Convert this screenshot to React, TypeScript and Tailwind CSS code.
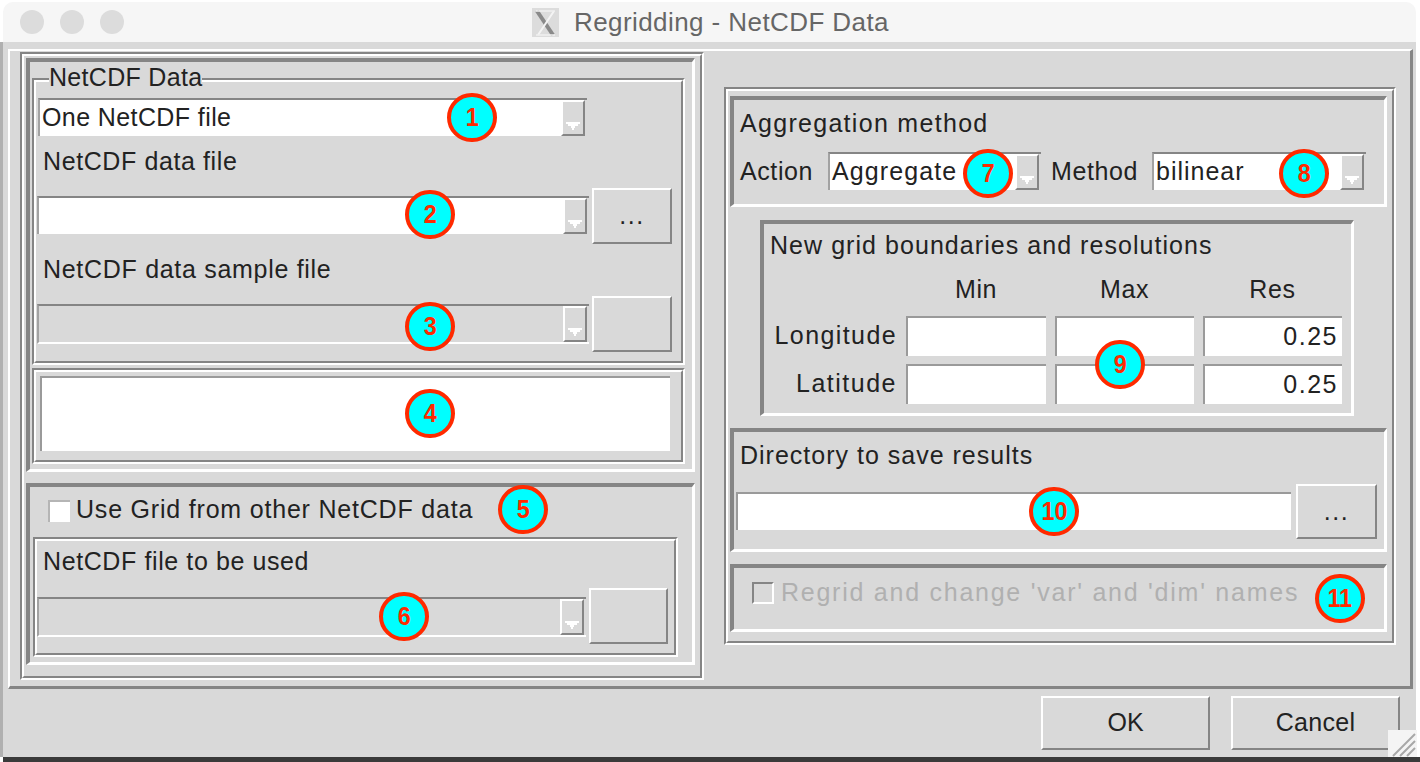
import React from "react";

const raisedEtch = "border-2 border-t-[#858585] border-l-[#858585] border-r-white border-b-white";
const etchInner = "border-2 border-t-white border-l-white border-r-[#858585] border-b-[#858585]";
const sunken = "border-t-4 border-l-4 border-r-[3px] border-b-[3px] border-t-[#858585] border-l-[#858585] border-r-white border-b-white";
const label = "h-[30px] leading-[30px] text-[25px] text-[#222222] whitespace-nowrap";

function Etched({ className, children }: { className: string; children?: React.ReactNode }) {
  return (
    <div className={`${raisedEtch} ${className}`}>
      <div className={`${etchInner} w-full h-full`}>{children}</div>
    </div>
  );
}

function Arrow() {
  return (
    <svg width="14" height="8" viewBox="0 0 14 8" fill="#ffffff" className="block">
      <polygon points="0,0 14,0 14,2 12,2 12,4 9,4 9,6 8,6 8,8 6,8 6,6 5,6 5,4 2,4 2,2 0,2" />
    </svg>
  );
}

function Combo({ w, value, disabled, track }: { w: string; value?: string; disabled?: boolean; track?: string }) {
  return (
    <div
      className={`${w} flex border-t-2 border-l-2 border-t-[#858585] border-l-[#a2a2a2] ${
        disabled ? "h-[40px] bg-[#d9d9d9] border-b-2 border-b-white" : "h-[38px]"
      }`}
    >
      <div
        className={`flex-1 min-w-0 overflow-hidden pl-[2px] leading-[34px] text-[25px] text-[#222222] whitespace-nowrap ${track ?? ""} ${
          disabled ? "" : "bg-white"
        }`}
      >
        {value}
      </div>
      <div className="w-[24px] mr-[2px] h-full flex items-end justify-center pb-[4px] bg-[#d9d9d9] border-t-2 border-l-2 border-t-white border-l-white border-r-2 border-b-2 border-r-[#858585] border-b-[#858585]">
        <Arrow />
      </div>
    </div>
  );
}

function Btn({ className, text, tc }: { className: string; text?: string; tc?: string }) {
  return (
    <div
      className={`${className} flex items-center justify-center bg-[#d9d9d9] border-2 border-t-white border-l-white border-r-[#858585] border-b-[#858585] text-[25px] text-[#222222] ${tc ?? ""}`}
    >
      {text}
    </div>
  );
}

function Field({ value }: { value?: string }) {
  return (
    <div className="w-full h-[40px] bg-white border-t-2 border-l-2 border-t-[#9a9a9a] border-l-[#9a9a9a] pr-[4px] text-right leading-[36px] text-[25px] tracking-[1.5px] text-[#222222]">
      {value}
    </div>
  );
}

function Badge({ n, cls }: { n: string; cls: string }) {
  return (
    <div
      className={`absolute ${cls} w-[50px] h-[49px] rounded-full bg-[#00ffff] border-4 border-[#ff2a00] flex items-center justify-center text-[#ff2a00] font-bold text-[26px]`}
    >
      <span className="block scale-x-[0.9]">{n}</span>
    </div>
  );
}

export default function App() {
  return (
    <div className="relative w-[1420px] h-[762px] overflow-hidden bg-white flex font-['Liberation_Sans',sans-serif]">
      <div className="w-[3px] mt-[42px] h-[715px] bg-[#b0b0b0]" />
      <div className="w-[1413px] pt-[2px]">
        {/* title bar */}
        <div className="h-[40px] bg-[#f6f6f6] rounded-t-[10px] flex items-center">
          <div className="ml-[17px] flex gap-[16px]">
            <div className="w-[24px] h-[24px] rounded-full bg-[#dcdcdc]" />
            <div className="w-[24px] h-[24px] rounded-full bg-[#dcdcdc]" />
            <div className="w-[24px] h-[24px] rounded-full bg-[#dcdcdc]" />
          </div>
          <svg width="27" height="29" viewBox="0 0 27 29" className="ml-[408px] block">
            <rect width="27" height="29" fill="#dcdcdc" />
            <path d="M5 3 L21 27" stroke="#8a8a8a" strokeWidth="4" />
            <path d="M22 3 L6 27" stroke="#f4f4f4" strokeWidth="2" />
            <path d="M4 3 H23 M4 27 H23" stroke="#efefef" strokeWidth="1.5" />
          </svg>
          <div className="ml-[15px] text-[26px] tracking-[0.42px] text-[#666666] whitespace-nowrap">
            Regridding - NetCDF Data
          </div>
        </div>

        {/* body */}
        <div className="h-[715px] bg-[#d9d9d9] pl-[5px] pt-[7px]">
          <div className="w-[1405px] h-[640px] flex items-start border-t-2 border-l-2 border-t-white border-l-white border-r-[3px] border-b-[3px] border-r-[#858585] border-b-[#858585] pl-[10px] pt-[1px]">
            {/* left column */}
            <Etched className="w-[684px] h-[628px] shrink-0">
              <div className={`${sunken} ml-[2px] mt-[2px] w-[669px] h-[414px]`}>
                <Etched className="relative ml-[2px] mt-[16px] w-[653px] h-[287px]">
                  <div className="absolute left-[15px] top-[-18px] bg-[#d9d9d9] h-[30px] leading-[30px] text-[25px] tracking-[0.3px] text-[#222222] whitespace-nowrap">
                    NetCDF Data
                  </div>
                  <div className="ml-[2px] pt-[16px]">
                    <Combo w="w-[549px]" value="One NetCDF file" track="tracking-[0.4px]" />
                  </div>
                  <div className={`${label} tracking-[0.6px] ml-[7px] mt-[10px]`}>NetCDF data file</div>
                  <div className="flex items-start mt-[12px] ml-[1px]">
                    <div className="mt-[8px]">
                      <Combo w="w-[552px]" />
                    </div>
                    <Btn className="ml-[3px] w-[80px] h-[56px]" text="..." tc="tracking-[1.5px]" />
                  </div>
                  <div className={`${label} tracking-[0.7px] ml-[7px] mt-[10px]`}>NetCDF data sample file</div>
                  <div className="flex items-start mt-[12px] ml-[1px]">
                    <div className="mt-[8px]">
                      <Combo w="w-[552px]" disabled />
                    </div>
                    <Btn className="ml-[3px] w-[80px] h-[56px]" />
                  </div>
                </Etched>
                <Etched className="ml-[2px] mt-[3px] w-[653px] h-[96px]">
                  <div className="ml-[4px] mt-[4px] w-[630px] h-[75px] bg-white border-t-2 border-l-2 border-t-[#9a9a9a] border-l-[#9a9a9a]" />
                </Etched>
              </div>

              <div className={`${sunken} ml-[2px] mt-[11px] w-[669px] h-[182px]`}>
                <div className="flex items-center ml-[18px] mt-[13px] h-[22px]">
                  <div className="w-[22px] h-[22px] bg-white border-t-2 border-l-2 border-t-[#b5b5b5] border-l-[#b5b5b5]" />
                  <div className="ml-[6px] -mt-[2px] text-[25px] tracking-[0.8px] text-[#222222] whitespace-nowrap">
                    Use Grid from other NetCDF data
                  </div>
                </div>
                <Etched className="ml-[3px] mt-[15px] w-[645px] h-[120px]">
                  <div className={`${label} tracking-[0.6px] ml-[6px] mt-[5px]`}>NetCDF file to be used</div>
                  <div className="flex items-start mt-[12px]">
                    <div className="mt-[9px]">
                      <Combo w="w-[549px]" disabled />
                    </div>
                    <Btn className="ml-[3px] w-[79px] h-[56px]" />
                  </div>
                </Etched>
              </div>
            </Etched>

            {/* right column */}
            <Etched className="ml-[20px] mt-[35px] w-[672px] h-[558px] shrink-0">
              <div className={`${sunken} ml-[2px] mt-[5px] w-[657px] h-[111px]`}>
                <div className={`${label} tracking-[1.3px] ml-[6px] mt-[8px]`}>Aggregation method</div>
                <div className="flex items-start ml-[6px] mt-[14px] h-[40px]">
                  <div className="w-[88px] h-[38px] leading-[38px] text-[25px] tracking-[0.6px] text-[#222222]">Action</div>
                  <Combo w="w-[213px]" value="Aggregate" track="tracking-[1.1px]" />
                  <div className="ml-[10px] w-[101px] h-[38px] leading-[38px] text-[25px] tracking-[0.6px] text-[#222222]">Method</div>
                  <Combo w="w-[214px]" value="bilinear" track="tracking-[1px]" />
                </div>
              </div>

              <div className={`${sunken} ml-[32px] mt-[13px] w-[594px] h-[196px]`}>
                <div className={`${label} tracking-[1.05px] ml-[6px] mt-[6px]`}>New grid boundaries and resolutions</div>
                <div className="mt-[14px] grid grid-cols-[133px_140px_139px_139px] gap-x-[9px] gap-y-[8px]">
                  <div className="h-[30px] mb-[4px]" />
                  <div className={`${label} tracking-[0.6px] mb-[4px] text-center`}>Min</div>
                  <div className={`${label} tracking-[0.6px] mb-[4px] text-center`}>Max</div>
                  <div className={`${label} tracking-[0.6px] mb-[4px] text-center`}>Res</div>
                  <div className="h-[40px] leading-[38px] text-[25px] tracking-[1.4px] text-[#222222] text-right">Longitude</div>
                  <Field />
                  <Field />
                  <Field value="0.25" />
                  <div className="h-[40px] leading-[38px] text-[25px] tracking-[1.5px] text-[#222222] text-right">Latitude</div>
                  <Field />
                  <Field />
                  <Field value="0.25" />
                </div>
              </div>

              <div className={`${sunken} ml-[2px] mt-[12px] w-[657px] h-[124px]`}>
                <div className={`${label} tracking-[1px] ml-[6px] mt-[8px]`}>Directory to save results</div>
                <div className="flex items-start ml-[2px] mt-[14px]">
                  <div className="mt-[8px] w-[555px] h-[38px] bg-white border-t-2 border-l-2 border-t-[#9a9a9a] border-l-[#9a9a9a]" />
                  <Btn className="ml-[5px] w-[81px] h-[55px]" text="..." tc="tracking-[1.5px]" />
                </div>
              </div>

              <div className={`${sunken} ml-[2px] mt-[12px] w-[657px] h-[68px]`}>
                <div className="flex items-center ml-[18px] mt-[14px] h-[22px]">
                  <div className="w-[22px] h-[22px] border-2 border-t-[#858585] border-l-[#858585] border-r-white border-b-white" />
                  <div className="ml-[7px] text-[25px] tracking-[1.75px] text-[#b0b0b0] whitespace-nowrap">
                    Regrid and change 'var' and 'dim' names
                  </div>
                </div>
              </div>
            </Etched>
          </div>

          {/* bottom buttons */}
          <div className="flex justify-end gap-[21px] pr-[16px] mt-[7px]">
            <Btn className="w-[169px] h-[54px]" text="OK" />
            <Btn className="w-[169px] h-[54px]" text="Cancel" tc="tracking-[0.3px]" />
          </div>
        </div>
      </div>

      {/* bottom shadow */}
      <div className="absolute left-[3px] right-0 top-[757px] h-[5px] bg-[#3a3a3a]" />

      {/* resize grip */}
      <svg width="29" height="27" viewBox="0 0 29 27" className="absolute left-[1388px] top-[730px]">
        <rect width="29" height="27" fill="#f4f4f4" />
        <path d="M5 26 L27 4 M12 26 L27 11 M19 26 L27 18" stroke="#a8a8a8" strokeWidth="2" />
      </svg>

      <Badge n="1" cls="left-[447px] top-[93px]" />
      <Badge n="2" cls="left-[405px] top-[190px]" />
      <Badge n="3" cls="left-[405px] top-[302px]" />
      <Badge n="4" cls="left-[405px] top-[389px]" />
      <Badge n="5" cls="left-[498px] top-[485px]" />
      <Badge n="6" cls="left-[379px] top-[592px]" />
      <Badge n="7" cls="left-[963px] top-[149px]" />
      <Badge n="8" cls="left-[1279px] top-[149px]" />
      <Badge n="9" cls="left-[1095px] top-[340px]" />
      <Badge n="10" cls="left-[1029px] top-[487px]" />
      <Badge n="11" cls="left-[1315px] top-[574px]" />
    </div>
  );
}
